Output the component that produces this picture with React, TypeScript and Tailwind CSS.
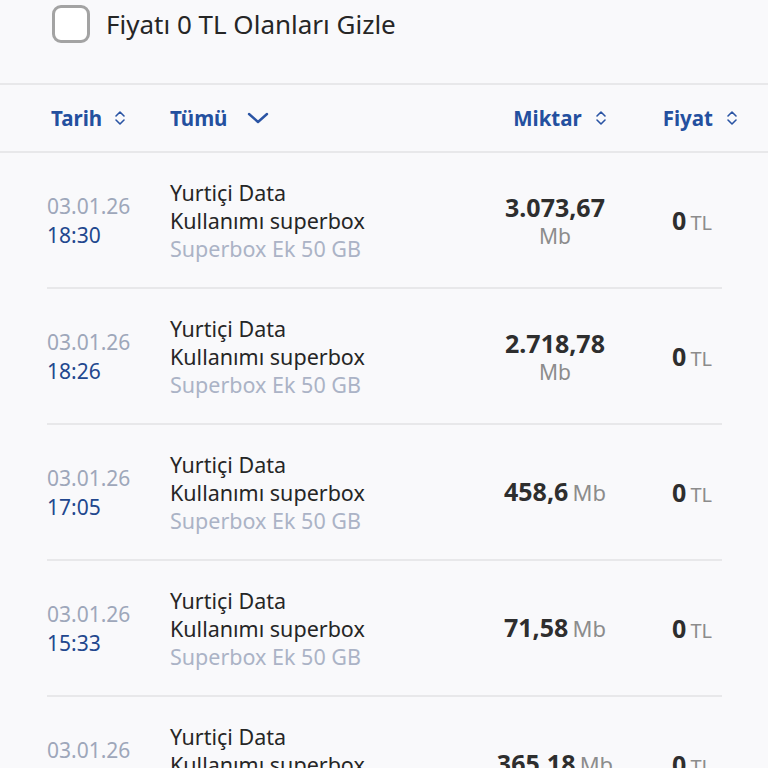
import React, { useState } from 'react';

interface Usage {
  date: string;
  time: string;
  title: string[];
  subtitle: string;
  amount: string;
  unit: string;
  stacked: boolean;
  price: string;
}

const rows: Usage[] = [
  { date: '03.01.26', time: '18:30', title: ['Yurtiçi Data', 'Kullanımı superbox'], subtitle: 'Superbox Ek 50 GB', amount: '3.073,67', unit: 'Mb', stacked: true, price: '0' },
  { date: '03.01.26', time: '18:26', title: ['Yurtiçi Data', 'Kullanımı superbox'], subtitle: 'Superbox Ek 50 GB', amount: '2.718,78', unit: 'Mb', stacked: true, price: '0' },
  { date: '03.01.26', time: '17:05', title: ['Yurtiçi Data', 'Kullanımı superbox'], subtitle: 'Superbox Ek 50 GB', amount: '458,6', unit: 'Mb', stacked: false, price: '0' },
  { date: '03.01.26', time: '15:33', title: ['Yurtiçi Data', 'Kullanımı superbox'], subtitle: 'Superbox Ek 50 GB', amount: '71,58', unit: 'Mb', stacked: false, price: '0' },
  { date: '03.01.26', time: '15:20', title: ['Yurtiçi Data', 'Kullanımı superbox'], subtitle: 'Superbox Ek 50 GB', amount: '365,18', unit: 'Mb', stacked: false, price: '0' },
];

const SortIcon = () => (
  <svg width="14" height="18" viewBox="0 0 14 18" fill="none" stroke="#2a54a4" strokeWidth="1.6" strokeLinecap="round" strokeLinejoin="round">
    <path d="M3 7l4-4 4 4" />
    <path d="M3 11l4 4 4-4" />
  </svg>
);

const ChevronDown = () => (
  <svg width="22" height="14" viewBox="0 0 22 14" fill="none" stroke="#2a54a4" strokeWidth="2.4" strokeLinecap="round" strokeLinejoin="round">
    <path d="M2 3l9 8 9-8" />
  </svg>
);

const App: React.FC = () => {
  const [hideFree, setHideFree] = useState(false);

  return (
    <div className="min-h-screen bg-[#f9f9fb] text-[#2b2b2b]" style={{ fontFamily: '"Noto Sans", Lato, sans-serif' }}>
      {/* Filtro */}
      <div className="h-[83px] pt-[5px] pl-[52px]">
        <label className="flex items-center gap-[16px] cursor-pointer">
          <button
            onClick={() => setHideFree(!hideFree)}
            className="w-[38px] h-[38px] rounded-[9px] border-[3px] border-[#a3a3a3] bg-white"
          />
          <span className="text-[26px] leading-[38px] text-[#262626]">Fiyatı 0 TL Olanları Gizle</span>
        </label>
      </div>

      {/* Cabecera */}
      <div className="h-[70px] border-y-2 border-[#e8e8ea] flex items-center pl-[51px] text-[20.5px] font-bold text-[#24509f]">
        <div className="w-[119px] flex items-center gap-[11px]">
          Tarih <SortIcon />
        </div>
        <div className="flex items-center gap-[20px]">
          Tümü <ChevronDown />
        </div>
        <div className="ml-auto flex items-center gap-[12px] mr-[55px]">
          Miktar <SortIcon />
        </div>
        <div className="flex items-center gap-[12px] mr-[29px]">
          Fiyat <SortIcon />
        </div>
      </div>

      {/* Lista */}
      <div className="pl-[47px] w-[722px]">
        {rows.map((row, i) => (
          <div key={i} className="flex items-center pt-[26px] pb-[24px] border-b-2 border-[#e8e8ea]">
            <div className="w-[123px] text-[21px] leading-[29px]">
              <div className="text-[#9ea7ba]">{row.date}</div>
              <div className="text-[#22478e]">{row.time}</div>
            </div>
            <div className="flex-1 text-[21.5px] leading-[28px] whitespace-nowrap">
              {row.title.map((t) => (
                <div key={t} className="text-[#262626]">{t}</div>
              ))}
              <div className="text-[#abb3c6]">{row.subtitle}</div>
            </div>
            <div className="w-[150px] text-center whitespace-nowrap">
              {row.stacked ? (
                <>
                  <div className="text-[25px] leading-[31px] font-bold text-[#2e2e2e]">{row.amount}</div>
                  <div className="text-[21px] leading-[27px] text-[#8c8c8c]">{row.unit}</div>
                </>
              ) : (
                <div className="leading-[29px]">
                  <span className="text-[25px] font-bold text-[#2e2e2e]">{row.amount}</span>{' '}
                  <span className="text-[22px] text-[#8c8c8c]">{row.unit}</span>
                </div>
              )}
            </div>
            <div className="w-[92px] pl-[42px] whitespace-nowrap">
              <span className="text-[25px] font-bold text-[#2e2e2e]">{row.price}</span>{' '}
              <span className="text-[20px] text-[#8c8c8c]">TL</span>
            </div>
          </div>
        ))}
      </div>
    </div>
  );
};

export default App;
